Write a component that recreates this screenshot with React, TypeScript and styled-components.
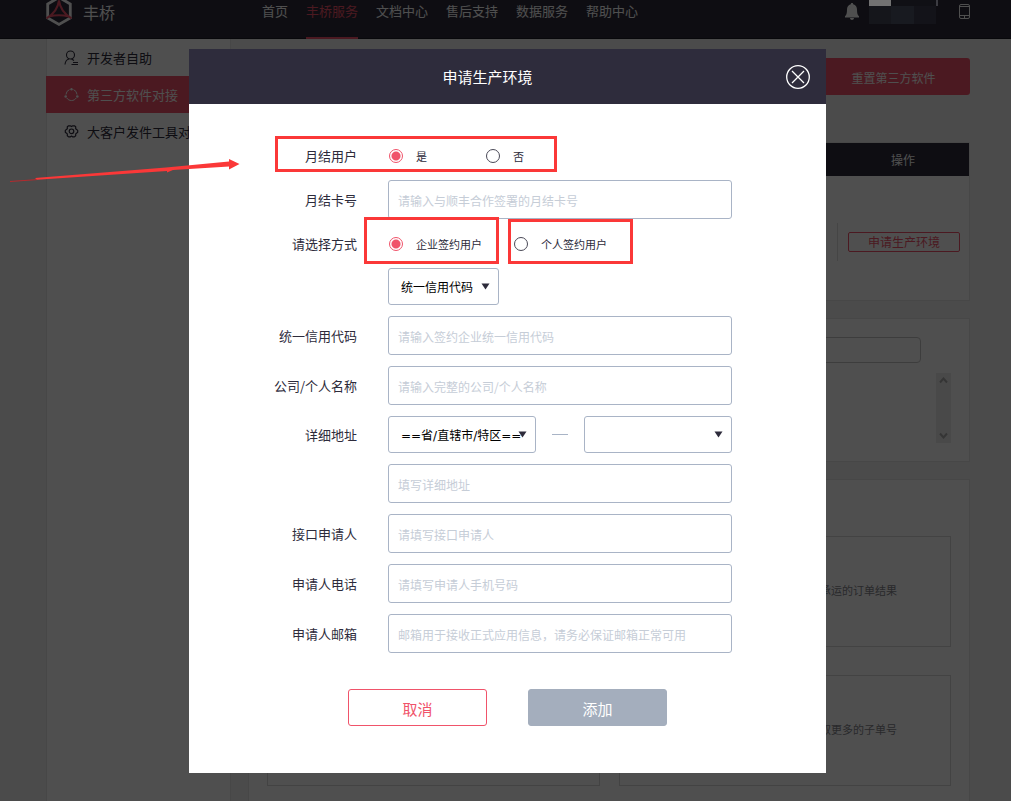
import React from 'react';
import styled, { createGlobalStyle, css } from 'styled-components';

const ink = '#2d2b3b';
const accent = '#f0536a';
const line = '#a9b4c6';
const mark = '#fb3838';

const GlobalStyle = createGlobalStyle`
  *, *::before, *::after { box-sizing: border-box; }
  body {
    margin: 0;
    overflow: hidden;
    background: #f3f3f3;
    color: ${ink};
    font-family: 'Noto Sans CJK SC', 'Noto Sans', sans-serif;
    font-size: 13px;
    line-height: 20px;
  }
  button, input, select { font: inherit; color: inherit; margin: 0; }
  a { color: inherit; text-decoration: none; }
`;

const Page = styled.div`
  display: flex;
  flex-direction: column;
  height: 100vh;
`;

/* ---------- top bar ---------- */

const TopBar = styled.header`
  display: flex;
  align-items: flex-start;
  height: 39px;
  flex: none;
  padding: 0 40px 0 46px;
  background: ${ink};
  border-bottom: 1px solid #1c1b26;
  color: #fff;
`;

const Brand = styled.a`
  display: flex;
  gap: 11px;
  width: 216px;
  font-size: 16px;
  line-height: 24px;
`;

const Nav = styled.nav`
  display: flex;
  gap: 18px;
`;

const NavLink = styled.a<{ $active?: boolean }>`
  height: 39px;
  line-height: 22px;
  border-bottom: 2px solid transparent;
  ${(p) => p.$active && css`
    color: ${accent};
    border-bottom-color: ${accent};
  `}
`;

const Tools = styled.div`
  display: flex;
  align-items: flex-start;
  margin-left: auto;
`;

const ToolIcon = styled.svg`
  display: block;
  margin-top: 3px;
`;

const UserMosaic = styled.svg`
  position: relative;
  z-index: 20;
  display: block;
  margin: 0 20px 0 10px;
`;

/* ---------- side menu ---------- */

const Body = styled.div`
  display: flex;
  flex: 1;
  gap: 17px;
  padding: 0 41px 0 46px;
  min-height: 0;
`;

const SideMenu = styled.aside`
  flex: none;
  width: 185px;
  background: #fff;
  border: solid #e6e6e6;
  border-width: 0 1px;
`;

const SideLink = styled.a<{ $active?: boolean }>`
  display: flex;
  align-items: center;
  gap: 8px;
  height: 37px;
  padding-left: 17px;
  white-space: nowrap;
  overflow: hidden;
  ${(p) => p.$active && css`
    background: ${accent};
    color: #fff;
    margin: 0 -1px;
    padding-left: 18px;
  `}
`;

/* ---------- main column ---------- */

const Main = styled.main`
  display: flex;
  flex-direction: column;
  flex: 1;
  min-width: 0;
  padding-top: 19px;
`;

const ResetButton = styled.button`
  align-self: flex-end;
  width: 153px;
  height: 37px;
  padding: 2px 0 0;
  border: 0;
  border-radius: 3px;
  background: ${accent};
  color: #fff;
  font-size: 12px;
  margin-bottom: 47px;
`;

const Card = styled.section`
  background: #fff;
  border: 1px solid #e6e6e6;
  margin-bottom: 17px;
`;

const Table = styled.table`
  width: 100%;
  border-collapse: collapse;
  font-size: 12px;

  th {
    height: 33px;
    padding: 0;
    background: ${ink};
    color: #fff;
    font-weight: 400;
  }
  th:last-child { width: 132px; }
  td {
    height: 124px;
    padding: 8px 0 0;
  }
`;

const ActionCell = styled.div`
  display: flex;
  align-items: center;
  height: 38px;
  padding: 0 9px 0 10px;
  border-left: 1px solid #ddd;
`;

const ApplyButton = styled.button`
  flex: 1;
  height: 20px;
  padding: 0;
  line-height: 18px;
  border: 1px solid ${accent};
  border-radius: 2px;
  background: transparent;
  color: ${accent};
`;

const SearchCard = styled(Card)`
  display: flex;
  flex-direction: column;
  gap: 10px;
  padding: 18px;
`;

const SearchInput = styled.input`
  width: calc(100% - 30px);
  height: 26px;
  border: 1px solid #c4c4c4;
  border-radius: 4px;
  background: transparent;
`;

const ScrollTrack = styled.div`
  display: flex;
  flex-direction: column;
  justify-content: space-between;
  align-items: center;
  align-self: flex-end;
  width: 15px;
  height: 70px;
  padding: 4px 0;
  background: #ececec;
`;

const ApiCard = styled(Card)`
  display: grid;
  grid-template-columns: 1fr 1fr;
  align-content: start;
  gap: 28px 19px;
  flex: 1;
  margin-bottom: 0;
  padding: 56px 18px 0;
  border-bottom: 0;
`;

const ApiTile = styled.article`
  display: flex;
  align-items: center;
  justify-content: flex-end;
  height: 111px;
  padding: 0 53px 3px 0;
  border: 1px solid #d8d8d8;
  color: #85858c;
  font-size: 11px;
`;

/* ---------- dialog ---------- */

const Overlay = styled.div`
  position: fixed;
  inset: 0;
  z-index: 10;
  display: flex;
  justify-content: center;
  align-items: flex-start;
  padding: 49px 0 28px 4px;
  background: rgba(0, 0, 0, 0.69);
`;

const Dialog = styled.div`
  width: 637px;
  max-width: 100%;
  background: #fff;
`;

const DialogHeader = styled.header`
  display: grid;
  grid-template-columns: 1fr 24px;
  align-items: center;
  height: 55px;
  padding-right: 16px;
  background: #2e2c3c;
  color: #fff;

  h2 {
    margin: 0;
    font-size: 15px;
    font-weight: 400;
    text-align: center;
  }
`;

const CloseButton = styled.button`
  width: 24px;
  height: 24px;
  padding: 0;
  border: 0;
  background: none;

  svg { display: block; }
`;

const Form = styled.form`
  display: flex;
  flex-direction: column;
  gap: 11px;
  padding: 38px 0 47px;
`;

const Row = styled.div`
  position: relative;
  display: grid;
  grid-template-columns: 168px minmax(0, 344px);
  column-gap: 31px;
  align-items: center;
`;

const Label = styled.label`
  text-align: right;
`;

const Field = styled.div`
  grid-column: 2;
  display: flex;
  align-items: center;
`;

const TextInput = styled.input`
  grid-column: 2;
  width: 100%;
  height: 39px;
  padding: 2px 9px 0;
  border: 1px solid ${line};
  border-radius: 3px;
  background: #fff;
  font-size: 12px;

  &::placeholder { color: #c6cdd7; opacity: 1; }
`;

const RadioLabel = styled.label<{ $width?: number }>`
  display: flex;
  align-items: center;
  gap: 13px;
  height: 27px;
  width: ${(p) => (p.$width ? `${p.$width}px` : 'auto')};
  font-size: 11px;
`;

const RadioGroup = styled(Field)`
  padding-left: 1px;
`;

const Radio = styled.input`
  appearance: none;
  width: 14px;
  height: 14px;
  border: 1px solid #4a4957;
  border-radius: 50%;
  background: #fff;

  &:checked {
    border-color: ${accent};
    background: radial-gradient(circle, ${accent} 0 4px, #fff 5px);
  }
`;

const SelectBox = styled.div<{ $width: number }>`
  position: relative;
  width: ${(p) => p.$width}px;

  svg {
    position: absolute;
    right: 9px;
    top: 15px;
    pointer-events: none;
  }
`;

const Select = styled.select`
  appearance: none;
  display: block;
  width: 100%;
  height: 37px;
  padding: 2px 0 0 12px;
  border: 1px solid ${line};
  border-radius: 3px;
  background: #fff;
  color: #000;
  font-family: 'DejaVu Sans', 'Noto Sans CJK SC', sans-serif;
  font-size: 12px;
`;

const Dash = styled.span`
  width: 16px;
  height: 1px;
  margin: 0 16px;
  background: ${line};
`;

const Actions = styled.div`
  display: flex;
  justify-content: center;
  gap: 41px;
  padding-top: 25px;
`;

const ActionButton = styled.button<{ $filled?: boolean }>`
  width: 139px;
  height: 37px;
  padding: 2px 0 0;
  border: 1px solid ${(p) => (p.$filled ? '#a4aebd' : accent)};
  border-radius: 3px;
  background: ${(p) => (p.$filled ? '#a4aebd' : '#fff')};
  color: ${(p) => (p.$filled ? '#fff' : accent)};
  font-size: 15px;
`;

/* ---------- annotations drawn over the page ---------- */

const Highlight = styled.span<{ $left: number; $top: number; $width: number; $height: number }>`
  position: absolute;
  left: ${(p) => p.$left}px;
  top: ${(p) => p.$top}px;
  width: ${(p) => p.$width}px;
  height: ${(p) => p.$height}px;
  border: 3px solid ${mark};
  pointer-events: none;
`;

const Arrow = styled.svg`
  position: absolute;
  left: 0;
  top: 150px;
  z-index: 30;
  pointer-events: none;
`;

const Caret = () => (
  <svg width="9" height="7" viewBox="0 0 9 7" aria-hidden="true">
    <path d="M0.5 0.5h8L4.5 6.5z" fill={ink} />
  </svg>
);

const Chevron = ({ down }: { down?: boolean }) => (
  <svg width="9" height="7" viewBox="0 0 9 7" aria-hidden="true">
    <path d={down ? 'M1 1.5l3.5 4 3.5-4' : 'M1 5.5l3.5-4 3.5 4'} fill="none" stroke="#aaa" strokeWidth="2" />
  </svg>
);

const Logo = () => (
  <svg width="26" height="26" viewBox="0 0 26 26" aria-hidden="true">
    <path d="M13-2.6L24.3 4v14L13 24.4 1.7 18V4z" fill="none" stroke="#fff" strokeWidth="2.8" />
    <path d="M13 0.5Q11.500 12 0.500 18.300M13 0.500Q14.500 12 25.500 18.300M3 16.500Q13 13.800 23 16.500" fill="none" stroke={accent} strokeWidth="2" />
  </svg>
);

const PersonIcon = () => (
  <svg width="15" height="16" viewBox="0 0 15 16" fill="none" stroke="currentColor" strokeWidth="1.1" aria-hidden="true">
    <circle cx="6.500" cy="5" r="4" />
    <path d="M1 14.500c.3-3 1.500-5 4-5.500M7.500 9l2.500 1.500M9 12.500h5M7.500 14.500H14" />
  </svg>
);

const RingIcon = () => (
  <svg width="15" height="16" viewBox="0 0 15 16" fill="none" stroke="currentColor" aria-hidden="true">
    <path d="M2 7.500A5.600 5.600 0 0 1 5.500 2.600M9.500 2.600A5.600 5.600 0 0 1 13 7.500M2.800 11a5.600 5.600 0 0 0 9.400 0" />
    <g fill="currentColor" stroke="none">
      <circle cx="7.500" cy="2.300" r="1.200" />
      <circle cx="1.700" cy="9.500" r="1.300" />
      <circle cx="13.300" cy="9.500" r="1.300" />
    </g>
  </svg>
);

const CogIcon = () => (
  <svg width="15" height="16" viewBox="0 0 15 16" fill="none" stroke="currentColor" strokeWidth="1.200" strokeLinejoin="round" aria-hidden="true">
    <path d="M4.600 1.800h1.600l1.300.8 1.300-.8h1.600l1.300 1v1.900l2 1.700v1.800l-2 1.700v1.900l-1.300 1.100H8.800l-1.300-.8-1.300.8H4.600l-1.300-1.100V9.900l-2-1.700V6.400l2-1.700V2.800z" />
    <circle cx="7.500" cy="7.300" r="2.300" />
  </svg>
);

type TextRowProps = { id: string; label?: string; name?: string; placeholder: string };

const TextRow = ({ id, label, name, placeholder }: TextRowProps) => (
  <Row>
    {label && <Label htmlFor={id}>{label}</Label>}
    <TextInput id={id} type="text" placeholder={placeholder} aria-label={name} />
  </Row>
);

export default function App() {
  return (
    <>
      <GlobalStyle />
      <Page>
        <TopBar>
          <Brand href="#">
            <Logo />
            丰桥
          </Brand>
          <Nav>
            <NavLink href="#">首页</NavLink>
            <NavLink href="#" $active>丰桥服务</NavLink>
            <NavLink href="#">文档中心</NavLink>
            <NavLink href="#">售后支持</NavLink>
            <NavLink href="#">数据服务</NavLink>
            <NavLink href="#">帮助中心</NavLink>
          </Nav>
          <Tools>
            <ToolIcon width="14" height="17" viewBox="0 0 14 17" fill="#fff" aria-hidden="true">
              <path d="M7 0c.8 0 1.200.5 1.200 1.200C10.800 1.800 12 4 12 6.500c0 4 .6 5.500 2 6.700v1.200H0v-1.200c1.400-1.200 2-2.700 2-6.700C2 4 3.200 1.800 5.800 1.200 5.800.5 6.200 0 7 0zM5 15h4c0 1.200-.9 2-2 2s-2-.8-2-2z" />
            </ToolIcon>
            <UserMosaic width="69" height="24" viewBox="0 0 69 24" aria-hidden="true">
              <rect y="0" width="22" height="24" fill="#15161b" />
              <rect x="22" width="23" height="24" fill="#181a20" />
              <rect x="45" width="22" height="24" fill="#131319" />
              <rect x="22" width="45" height="6" fill="#101015" />
              <rect width="22" height="6" fill="#727272" />
              <rect x="67" width="2" height="6" fill="#3c3c42" />
            </UserMosaic>
            <ToolIcon width="13" height="17" viewBox="0 0 13 17" fill="none" stroke="#fff" aria-hidden="true">
              <rect x="1.500" y="1.500" width="10" height="14" rx="1.500" />
              <path d="M2 3.500h9M2 12.500h9M6.500 13v2" />
            </ToolIcon>
          </Tools>
        </TopBar>

        <Body>
          <SideMenu>
            <SideLink href="#"><PersonIcon />开发者自助</SideLink>
            <SideLink href="#" $active><RingIcon />第三方软件对接</SideLink>
            <SideLink href="#"><CogIcon />大客户发件工具对接</SideLink>
          </SideMenu>

          <Main>
            <ResetButton type="button">重置第三方软件</ResetButton>
            <Card>
              <Table>
                <thead>
                  <tr><th /><th scope="col">操作</th></tr>
                </thead>
                <tbody>
                  <tr>
                    <td />
                    <td>
                      <ActionCell><ApplyButton type="button">申请生产环境</ApplyButton></ActionCell>
                    </td>
                  </tr>
                </tbody>
              </Table>
            </Card>
            <SearchCard>
              <SearchInput type="text" />
              <ScrollTrack>
                <Chevron />
                <Chevron down />
              </ScrollTrack>
            </SearchCard>
            <ApiCard>
              <ApiTile />
              <ApiTile>承运的订单结果</ApiTile>
              <ApiTile />
              <ApiTile>取更多的子单号</ApiTile>
            </ApiCard>
          </Main>
        </Body>
      </Page>

      <Overlay>
        <Dialog role="dialog" aria-labelledby="dialog-title">
          <DialogHeader>
            <h2 id="dialog-title">申请生产环境</h2>
            <CloseButton type="button" aria-label="关闭">
              <svg width="24" height="24" viewBox="0 0 24 24" fill="none" stroke="#fff" strokeWidth="1.300">
                <circle cx="12" cy="12" r="11.300" />
                <path d="M6 6l12 12M18 6L6 18" />
              </svg>
            </CloseButton>
          </DialogHeader>
          <Form>
            <Row role="radiogroup" aria-labelledby="monthly-label">
              <Label as="span" id="monthly-label">月结用户</Label>
              <RadioGroup>
                <RadioLabel $width={97}><Radio type="radio" name="monthly" defaultChecked />是</RadioLabel>
                <RadioLabel><Radio type="radio" name="monthly" />否</RadioLabel>
              </RadioGroup>
              <Highlight $left={86} $top={-6} $width={282} $height={36} />
            </Row>
            <TextRow id="card" label="月结卡号" placeholder="请输入与顺丰合作签署的月结卡号" />
            <Row role="radiogroup" aria-labelledby="mode-label">
              <Label as="span" id="mode-label">请选择方式</Label>
              <RadioGroup>
                <RadioLabel $width={125}><Radio type="radio" name="mode" defaultChecked />企业签约用户</RadioLabel>
                <RadioLabel><Radio type="radio" name="mode" />个人签约用户</RadioLabel>
              </RadioGroup>
              <Highlight $left={175} $top={-13} $width={135} $height={47} />
              <Highlight $left={319} $top={-11} $width={125} $height={45} />
            </Row>
            <Row>
              <Field>
                <SelectBox $width={111}>
                  <Select aria-label="证件类型"><option>统一信用代码</option></Select>
                  <Caret />
                </SelectBox>
              </Field>
            </Row>
            <TextRow id="code" label="统一信用代码" placeholder="请输入签约企业统一信用代码" />
            <TextRow id="company" label="公司/个人名称" placeholder="请输入完整的公司/个人名称" />
            <Row>
              <Label htmlFor="province">详细地址</Label>
              <Field>
                <SelectBox $width={148}>
                  <Select id="province"><option>==省/直辖市/特区==</option></Select>
                  <Caret />
                </SelectBox>
                <Dash />
                <SelectBox $width={148}>
                  <Select aria-label="城市"><option /></Select>
                  <Caret />
                </SelectBox>
              </Field>
            </Row>
            <TextRow id="address" name="详细地址" placeholder="填写详细地址" />
            <TextRow id="applicant" label="接口申请人" placeholder="请填写接口申请人" />
            <TextRow id="phone" label="申请人电话" placeholder="请填写申请人手机号码" />
            <TextRow id="email" label="申请人邮箱" placeholder="邮箱用于接收正式应用信息，请务必保证邮箱正常可用" />
            <Actions>
              <ActionButton type="button">取消</ActionButton>
              <ActionButton type="button" $filled>添加</ActionButton>
            </Actions>
          </Form>
        </Dialog>
      </Overlay>

      <Arrow width="250" height="40" viewBox="0 0 250 40" aria-hidden="true">
        <path d="M10 31.500L37 29.600" stroke="#b52a2e" strokeWidth="1" />
        <path d="M35 28L166 17.500 229 11.500V9L239.500 14 229 19.500V16.500L173 20l-6 2.500V21L37 29.800z" fill={mark} />
      </Arrow>
    </>
  );
}
